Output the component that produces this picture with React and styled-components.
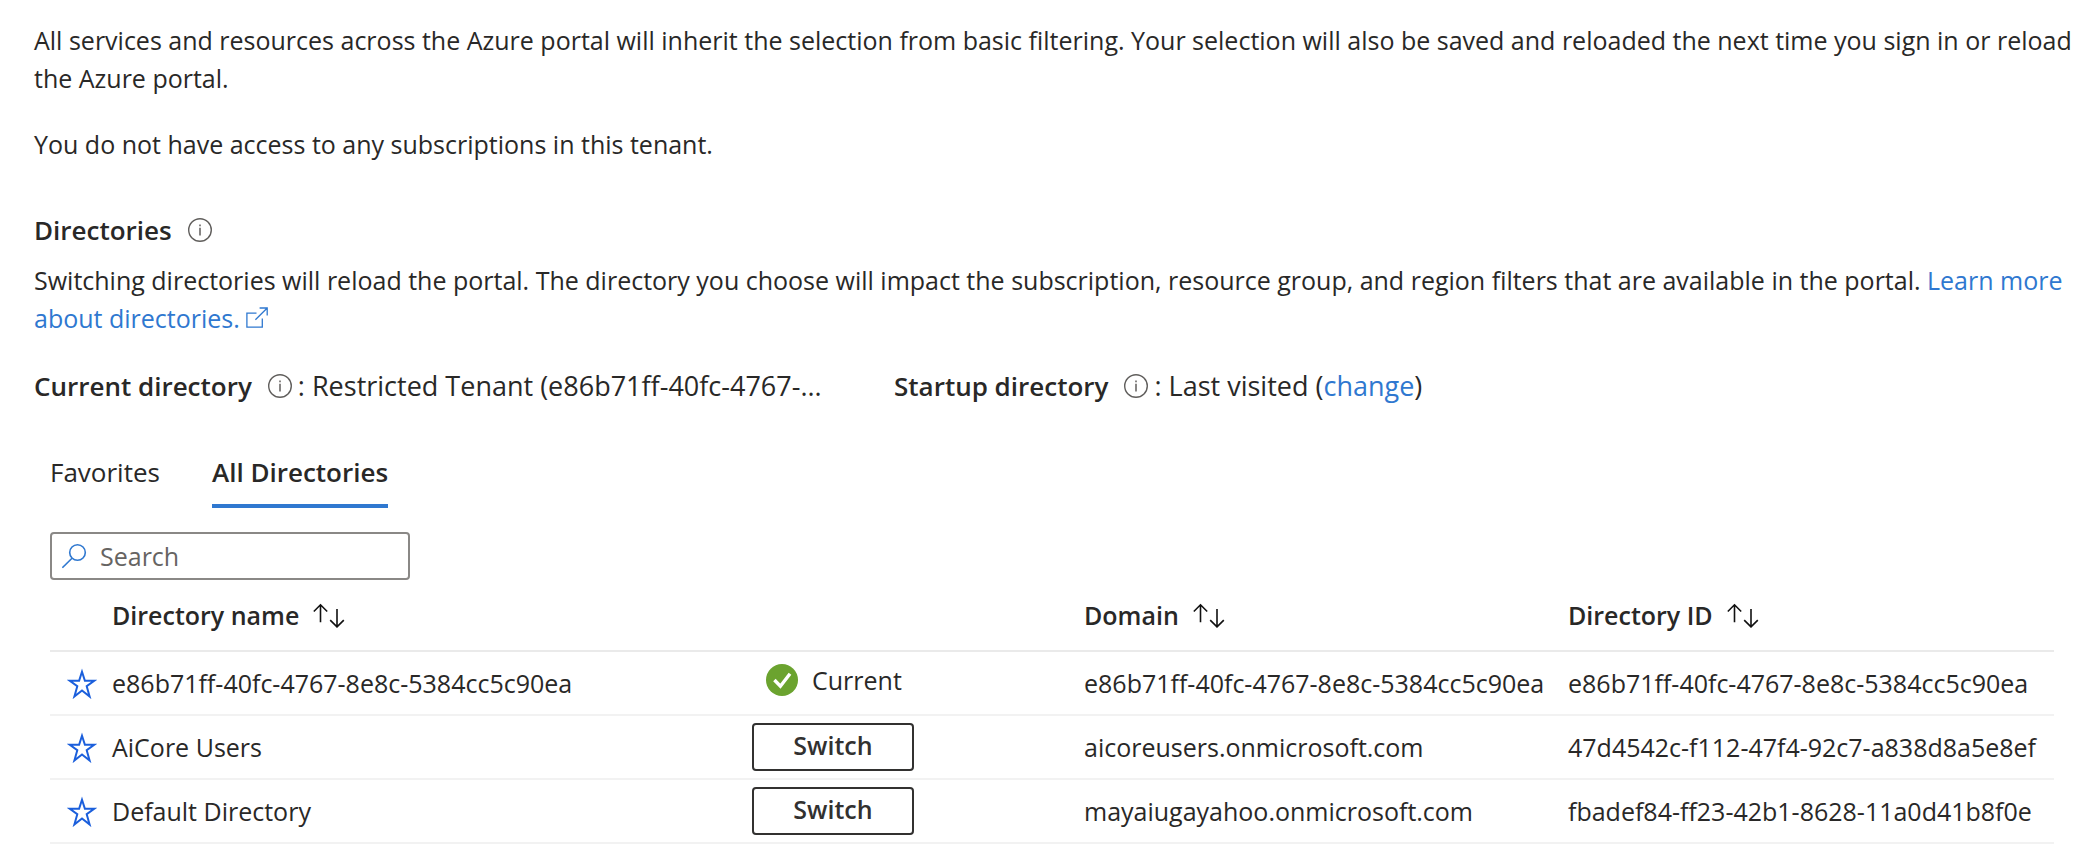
import React, { useState } from "react";
import styled, { createGlobalStyle } from "styled-components";

const ink = "#292827";
const link = "#2f78d0";

const GlobalStyle = createGlobalStyle`
  *, *::before, *::after { box-sizing: border-box; }
  body {
    margin: 0;
    background: #fff;
    color: ${ink};
    font: 400 25px/38px "Open Sans", "Noto Sans", sans-serif;
  }
  button, input { font: inherit; color: inherit; }
  svg { display: block; flex: none; }
`;

const Page = styled.main`
  padding: 21px 12px 16px 34px;
`;

const Paragraph = styled.p`
  margin: 0 0 ${(p) => p.$after || 0}px;
`;

const Link = styled.a`
  color: ${link};
  text-decoration: none;
  &:hover { text-decoration: underline; }
  svg { display: inline-block; }
`;

const Heading = styled.h2`
  display: flex;
  align-items: center;
  gap: 16px;
  margin: 0 0 12px;
  font-size: 26px;
  font-weight: 600;
  line-height: 38px;
`;

const Summary = styled.div`
  display: grid;
  grid-template-columns: 800px 1fr;
  column-gap: 60px;
  margin-bottom: 48px;
`;

const SummaryItem = styled.div`
  display: flex;
  align-items: center;
  white-space: nowrap;
`;

const SummaryLabel = styled.strong`
  margin-right: 16px;
  font-size: 26px;
  font-weight: 600;
`;

const SummaryValue = styled.span`
  margin-left: 6px;
  font-size: 27px;
`;

const Panel = styled.section`
  margin: 0 18px 0 16px;
`;

const TabList = styled.div`
  display: flex;
  gap: 52px;
  margin-bottom: 24px;
`;

const Tab = styled.button`
  padding: 0 0 13px;
  border: 0;
  border-bottom: 4px solid ${(p) => (p.$active ? link : "transparent")};
  background: none;
  font-size: 26px;
  font-weight: ${(p) => (p.$active ? 600 : 400)};
  cursor: pointer;
`;

const SearchBox = styled.label`
  display: flex;
  align-items: center;
  gap: 12px;
  width: 360px;
  height: 48px;
  padding: 0 10px;
  border: 2px solid #8a8886;
  border-radius: 4px;
`;

const SearchInput = styled.input`
  flex: 1;
  min-width: 0;
  height: 40px;
  padding: 0;
  border: 0;
  outline: 0;
  background: none;
  &::placeholder { color: #666462; opacity: 1; }
`;

const Table = styled.table`
  width: 100%;
  table-layout: fixed;
  border-collapse: separate;
  border-spacing: 0;
`;

const Col = styled.col`
  width: ${(p) => (p.$width ? `${p.$width}px` : "auto")};
`;

const HeaderCell = styled.th`
  height: 72px;
  padding: 0;
  border-bottom: 2px solid #eaeaea;
  font-weight: 600;
  text-align: left;
`;

const SortButton = styled.button`
  display: flex;
  align-items: center;
  gap: 14px;
  padding: 0;
  border: 0;
  background: none;
  font-weight: 600;
  cursor: pointer;
`;

const Cell = styled.td`
  height: 64px;
  padding: 0;
  border-bottom: 2px solid #f2f2f2;
  white-space: nowrap;
`;

const StarButton = styled.button`
  display: block;
  padding: 0 0 0 17px;
  border: 0;
  background: none;
  cursor: pointer;
`;

const CurrentStatus = styled.div`
  display: flex;
  align-items: center;
  gap: 14px;
  padding: 0 0 6px 14px;
`;

const SwitchButton = styled.button`
  display: block;
  width: 162px;
  height: 48px;
  padding: 0 0 4px;
  border: 2px solid #323130;
  border-radius: 4px;
  background: #fff;
  color: #323130;
  font-weight: 600;
  cursor: pointer;
`;

const InfoIcon = () => (
  <svg width="24" height="24" viewBox="0 0 24 24" fill="none" role="img" aria-label="Information">
    <circle cx="12" cy="12" r="11.3" stroke="#605e5c" strokeWidth="1.4" />
    <path d="M12 9.8v7.6M12 6.4v1.8" stroke="#605e5c" strokeWidth="1.5" />
  </svg>
);

const ExternalIcon = () => (
  <svg width="22" height="21" viewBox="0 0 22 21" fill="none" stroke={link} strokeWidth="1.3" aria-hidden="true">
    <path d="M10.5 6.2H.9v14h15.4v-8.6M13.6 1h7.6v7.6M21 1.2 9.4 12.8" />
  </svg>
);

const SearchIcon = () => (
  <svg width="26" height="26" viewBox="0 0 26 26" fill="none" stroke={link} strokeWidth="1.6" aria-hidden="true">
    <circle cx="15.5" cy="9.5" r="7.8" />
    <path d="M10 15.2.4 24.8" />
  </svg>
);

const SortIcon = () => (
  <svg width="32" height="25" viewBox="0 0 32 25" fill="none" stroke="#111" strokeWidth="1.6" aria-hidden="true">
    <path d="M7.5 19.3V1.8M.8 8.5 7.5 1.8 14.2 8.5M24 6.1v17.8M17.2 17.1l6.8 6.8 6.8-6.8" />
  </svg>
);

const StarIcon = () => (
  <svg width="30" height="32" viewBox="0 0 30 32" fill="none" stroke="#1b5fdc" strokeWidth="2" aria-hidden="true">
    <path d="M15 4.8 17.9 13.7H27.2L19.7 19.2 22.6 29.5 15 23.5 7.4 29.5 10.3 19.2 2.8 13.7H12.1Z" />
  </svg>
);

const CheckIcon = () => (
  <svg width="32" height="32" viewBox="0 0 32 32" fill="none" aria-hidden="true">
    <circle cx="16" cy="16" r="16" fill="#6ba32f" />
    <path d="M8.4 16 14.4 22.2 24 9.8" stroke="#fff" strokeWidth="3.4" />
  </svg>
);

const directories = [
  {
    name: "e86b71ff-40fc-4767-8e8c-5384cc5c90ea",
    domain: "e86b71ff-40fc-4767-8e8c-5384cc5c90ea",
    id: "e86b71ff-40fc-4767-8e8c-5384cc5c90ea",
    current: true,
  },
  { name: "AiCore Users", domain: "aicoreusers.onmicrosoft.com", id: "47d4542c-f112-47f4-92c7-a838d8a5e8ef" },
  { name: "Default Directory", domain: "mayaiugayahoo.onmicrosoft.com", id: "fbadef84-ff23-42b1-8628-11a0d41b8f0e" },
];

const tabs = ["Favorites", "All Directories"];

const SortHeader = ({ children }) => (
  <HeaderCell scope="col">
    <SortButton type="button">
      {children}
      <SortIcon />
    </SortButton>
  </HeaderCell>
);

export default function App() {
  const [active, setActive] = useState("All Directories");
  const [query, setQuery] = useState("");
  const rows = directories.filter((d) => d.name.toLowerCase().includes(query.toLowerCase()));

  return (
    <Page>
      <GlobalStyle />
      <Paragraph $after={28}>
        All services and resources across the Azure portal will inherit the selection from basic filtering. Your
        selection will also be saved and reloaded the next time you sign in or reload the Azure portal.
      </Paragraph>
      <Paragraph $after={48}>You do not have access to any subscriptions in this tenant.</Paragraph>

      <Heading>
        Directories
        <InfoIcon />
      </Heading>
      <Paragraph $after={30}>
        Switching directories will reload the portal. The directory you choose will impact the subscription, resource
        group, and region filters that are available in the portal.{" "}
        <Link href="#learn-more">
          Learn more about directories. <ExternalIcon />
        </Link>
      </Paragraph>

      <Summary>
        <SummaryItem>
          <SummaryLabel>Current directory</SummaryLabel>
          <InfoIcon />
          <SummaryValue>: Restricted Tenant (e86b71ff-40fc-4767-...</SummaryValue>
        </SummaryItem>
        <SummaryItem>
          <SummaryLabel>Startup directory</SummaryLabel>
          <InfoIcon />
          <SummaryValue>
            : Last visited (<Link href="#change">change</Link>)
          </SummaryValue>
        </SummaryItem>
      </Summary>

      <Panel>
        <TabList role="tablist">
          {tabs.map((tab) => (
            <Tab
              key={tab}
              type="button"
              role="tab"
              aria-selected={tab === active}
              $active={tab === active}
              onClick={() => setActive(tab)}
            >
              {tab}
            </Tab>
          ))}
        </TabList>

        <SearchBox>
          <SearchIcon />
          <SearchInput
            type="text"
            placeholder="Search"
            aria-label="Search"
            value={query}
            onChange={(e) => setQuery(e.target.value)}
          />
        </SearchBox>

        <Table>
          <colgroup>
            <Col $width={62} />
            <Col />
            <Col $width={332} />
            <Col $width={484} />
            <Col $width={486} />
          </colgroup>
          <thead>
            <tr>
              <HeaderCell aria-label="Favorite" />
              <SortHeader>Directory name</SortHeader>
              <HeaderCell aria-label="Action" />
              <SortHeader>Domain</SortHeader>
              <SortHeader>Directory ID</SortHeader>
            </tr>
          </thead>
          <tbody>
            {rows.map((d) => (
              <tr key={d.id}>
                <Cell>
                  <StarButton type="button" aria-label={`Add ${d.name} to favorites`}>
                    <StarIcon />
                  </StarButton>
                </Cell>
                <Cell>{d.name}</Cell>
                <Cell>
                  {d.current ? (
                    <CurrentStatus>
                      <CheckIcon />
                      Current
                    </CurrentStatus>
                  ) : (
                    <SwitchButton type="button">Switch</SwitchButton>
                  )}
                </Cell>
                <Cell>{d.domain}</Cell>
                <Cell>{d.id}</Cell>
              </tr>
            ))}
          </tbody>
        </Table>
      </Panel>
    </Page>
  );
}
